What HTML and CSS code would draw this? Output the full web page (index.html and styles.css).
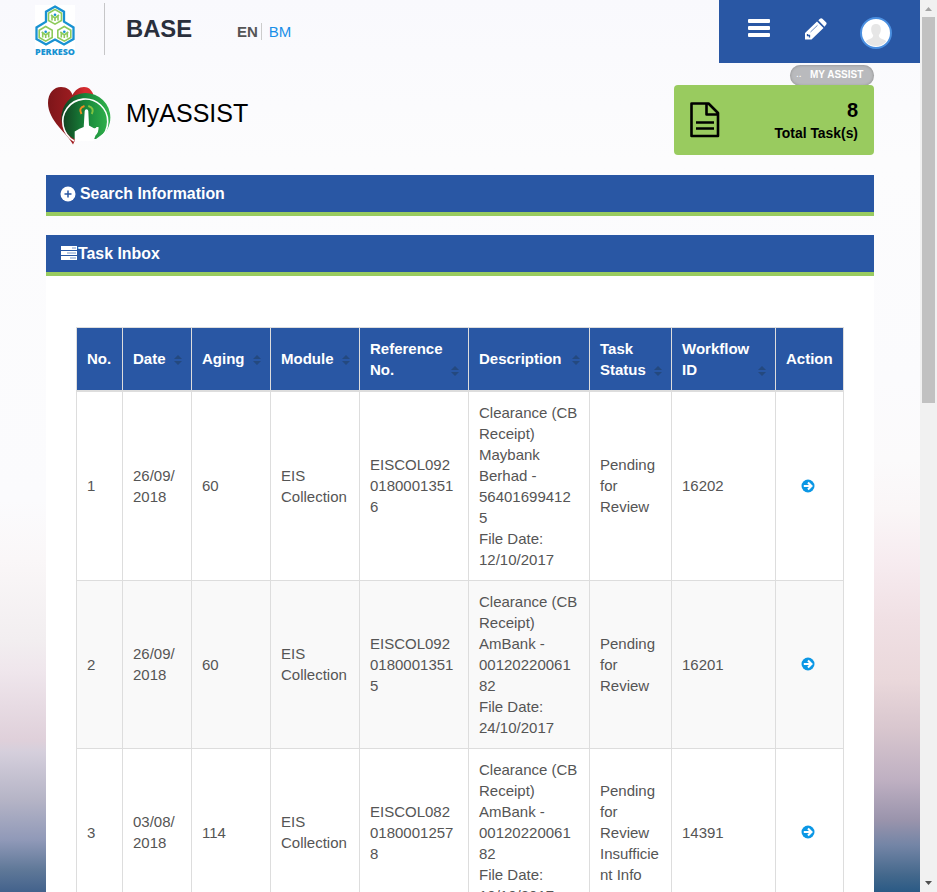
FILE: index.html
```html
<!DOCTYPE html>
<html lang="en">
<head>
<meta charset="utf-8">
<title>MyASSIST</title>
<link rel="stylesheet" href="styles.css">
</head>
<body>
<svg class="defs" width="0" height="0" aria-hidden="true">
  <symbol id="sort" viewBox="0 0 8 10"><path d="M0 4h8L4 0zM0 6h8L4 10z"/></symbol>
  <symbol id="go" viewBox="0 0 14 14"><circle cx="7" cy="7" r="6.5" fill="#0b97e5"/><path d="M2.8 7h7M7 3.4 10.5 7 7 10.6" fill="none" stroke="#fff" stroke-width="2.1"/></symbol>
</svg>
<div class="window">
  <div class="page">
    <header class="header">
      <div class="logo">
        <svg width="42" height="52" viewBox="0 0 42 52">
          <rect width="40" height="50" x="1" fill="#fff"/>
          <path d="M21 1.500 30 6.700v10L39.500 22.500v11.500L30 39.500 21 34.500l-9 5L2.500 34V22.500L12 16.700v-10z" fill="#fff" stroke="#1892d2" stroke-width="2.300"/>
          <g fill="none" stroke="#8dcb5c" stroke-width="1.600">
            <g id="cell"><path d="M21 4.500l6.500 3.700v7.300L21 19.200l-6.500-3.700V8.200z"/><path d="M17 10l4 3 4-3M18 11v4.500M24 11v4.500M21 13v3"/></g>
            <use href="#cell" x="-9.300" y="17"/>
            <use href="#cell" x="9.300" y="17"/>
          </g>
          <g fill="#1892d2"><circle cx="21" cy="9.800" r="1.300"/><circle cx="11.700" cy="26.800" r="1.300"/><circle cx="30.300" cy="26.800" r="1.300"/></g>
          <text x="1" y="49.500" textLength="40" lengthAdjust="spacingAndGlyphs" class="logo-text">PERKESO</text>
        </svg>
      </div>
      <div class="brand">BASE</div>
      <div class="lang"><b>EN</b><a>BM</a></div>
      <nav class="tools">
        <svg class="bars" width="22" height="18" viewBox="0 0 22 18" fill="#fff"><rect width="22" height="4" rx="1"/><rect y="7" width="22" height="4" rx="1"/><rect y="14" width="22" height="4" rx="1"/></svg>
        <svg class="pencil" width="22" height="22" viewBox="0 0 22 22"><path d="M0 21.500V15L12 3.500 18.500 10 6.500 21.500zM13.300 2.300 15 .7q1.200-1 2.400 0L21 4.300q1.200 1.200 0 2.500l-1.500 2z" fill="#fff"/><path d="M2.500 16v1.500h2V19.500" fill="none" stroke="#2957a4" stroke-width="1.300"/><path d="M5.500 14l7-6.700" stroke="#2957a4" stroke-width=".7"/></svg>
        <svg class="avatar" width="32" height="32" viewBox="0 0 32 32"><circle cx="16" cy="16" r="15" fill="#fff" stroke="#4a8fe0" stroke-width="2"/><path d="M16 7c3.500 0 5 2.500 4.800 6-.2 2.500-1 4-2 5 .2 3 1.500 3.500 6.200 5.200.8.300 1.200 1 1 1.500A14 14 0 0 1 6 24.700c-.2-.5.200-1.200 1-1.500 4.700-1.700 6-2.200 6.200-5.200-1-1-1.800-2.500-2-5C11 9.500 12.500 7 16 7z" fill="#e6e6e6"/></svg>
      </nav>
    </header>

    <main class="content">
      <div class="crumb-row"><div class="crumb"><span class="dots">..</span>MY ASSIST</div></div>
      <section class="intro">
        <svg class="heart" width="66" height="64" viewBox="0 0 66 64">
          <defs>
            <linearGradient id="red"><stop offset="0" stop-color="#7d1519"/><stop offset=".5" stop-color="#9b1c20"/><stop offset=".8" stop-color="#d62c30"/></linearGradient>
            <linearGradient id="green"><stop offset="0" stop-color="#123f20"/><stop offset=".5" stop-color="#18863b"/><stop offset="1" stop-color="#32b54c"/></linearGradient>
          </defs>
          <path d="M27 60.500C22 50 2 37 2 19 2 9 8 3 15 3c6 0 10 3 11.500 8C29 6 33 3 38 3c6 0 9 5 10 10L30 54z" fill="url(#red)"/>
          <path d="M28 55A24.500 24.500 0 1 1 60 47.500L50 55z" fill="url(#green)"/>
          <path d="M28 57A22.500 22.500 0 1 1 54 54.500" fill="none" stroke="#fff" stroke-width="1.600"/>
          <path d="M28.700 57V47.500q5-3.500 9-4.500l1-16q.2-1.800 1.800-1.800t1.800 1.800l.7 14.500 4.500 2.500q2 1 3-1h2q.5 5-3 8.500L47.500 57z" fill="#fff"/>
          <path d="M35.500 30q-3.500-6 3-8" fill="none" stroke="#ef8c22" stroke-width="2"/>
          <path d="M42.300 22q6.500 2 3.500 8" fill="none" stroke="#83c441" stroke-width="2"/>
        </svg>
        <h1 class="title">MyASSIST</h1>
        <div class="stat">
          <svg width="32" height="38" viewBox="0 0 32 38" fill="none" stroke="#000" stroke-width="2.600" stroke-linejoin="round"><path d="M2.500 2.500h17l9.500 9.500v23h-26.500zM17.500 2.500V13.500h11.500"/><path d="M7 21.500h18M7 27.500h18" stroke-width="2.600"/></svg>
          <div class="stat-text"><div class="stat-num">8</div><div class="stat-label">Total Task(s)</div></div>
        </div>
      </section>

      <h2 class="bar"><svg width="16" height="16" viewBox="0 0 16 16"><circle cx="8" cy="8" r="7.500" fill="#fff"/><path d="M8 4.500v7M4.500 8h7" stroke="#2957a4" stroke-width="1.500"/></svg><span class="bar-gap">Search Information</span></h2>
      <h2 class="bar"><svg class="list" width="18" height="14" viewBox="0 0 18 14"><path d="M1 0h16v4H1zM1 5h16v4H1zM1 10h16v4H1z" fill="#fff"/><path d="M12 2h4M7 7h9M10 12h6" stroke="#7795c7"/></svg><span>Task Inbox</span></h2>

      <section class="panel">
        <table class="tasks">
          <colgroup><col class="c-no"><col class="c-date"><col class="c-aging"><col class="c-module"><col class="c-ref"><col class="c-desc"><col class="c-status"><col class="c-flow"><col class="c-action"></colgroup>
          <thead>
            <tr>
              <th>No.</th>
              <th><div class="th">Date<svg><use href="#sort"/></svg></div></th>
              <th><div class="th">Aging<svg><use href="#sort"/></svg></div></th>
              <th><div class="th">Module<svg><use href="#sort"/></svg></div></th>
              <th><div class="th">Reference<br>No.<svg><use href="#sort"/></svg></div></th>
              <th><div class="th">Description<svg><use href="#sort"/></svg></div></th>
              <th><div class="th">Task<br>Status<svg><use href="#sort"/></svg></div></th>
              <th><div class="th">Workflow<br>ID<svg><use href="#sort"/></svg></div></th>
              <th>Action</th>
            </tr>
          </thead>
          <tbody>
            <tr>
              <td>1</td><td>26/09/<wbr>2018</td><td>60</td><td>EIS Collection</td><td>EISCOL092<wbr>0180001351<wbr>6</td>
              <td>Clearance (CB Receipt)<br>Maybank Berhad - <br>56401699412<br>5<br>File Date: 12/10/2017</td>
              <td>Pending for Review</td><td>16202</td><td class="go"><svg><use href="#go"/></svg></td>
            </tr>
            <tr>
              <td>2</td><td>26/09/<wbr>2018</td><td>60</td><td>EIS Collection</td><td>EISCOL092<wbr>0180001351<wbr>5</td>
              <td>Clearance (CB Receipt)<br>AmBank - <br>00120220061<br>82<br>File Date: 24/10/2017</td>
              <td>Pending for Review</td><td>16201</td><td class="go"><svg><use href="#go"/></svg></td>
            </tr>
            <tr>
              <td>3</td><td>03/08/<wbr>2018</td><td>114</td><td>EIS Collection</td><td>EISCOL082<wbr>0180001257<wbr>8</td>
              <td>Clearance (CB Receipt)<br>AmBank - <br>00120220061<br>82<br>File Date: 10/10/2017</td>
              <td>Pending for Review Insufficie<wbr>nt Info</td><td>14391</td><td class="go"><svg><use href="#go"/></svg></td>
            </tr>
          </tbody>
        </table>
      </section>
    </main>
  </div>
  <div class="scrollbar">
    <svg width="17" height="17" viewBox="0 0 17 17"><path d="M5 11h7L8.500 7z" fill="#a3a3a3"/></svg>
    <div class="thumb"></div>
    <svg class="down" width="17" height="17" viewBox="0 0 17 17"><path d="M5 6h7l-3.500 4z" fill="#505050"/></svg>
  </div>
</div>
</body>
</html>
```
FILE: styles.css
```css
* { box-sizing: border-box; }
body {
  margin: 0;
  font: 15px/21px "Liberation Sans", Arial, sans-serif;
  color: #555;
  overflow: hidden;
}
.defs { position: absolute; }
svg { display: block; flex: none; }
.window { display: flex; height: 892px; overflow: hidden; }
.page {
  width: 920px;
  height: 892px;
  overflow: hidden;
  background:
    linear-gradient(#f9f9fd 0, #fcfcfd 160px, #fbfbfd 380px, #fbfafb 460px, #faf6f7 510px, #f7ecf0 560px, #f0e0e4 620px, #ead8db 680px, #d8c6ce 730px, #bfb0c2 780px, #9a94ac 820px, #7485a6 845px, #44688c 875px, #2a5a85 892px) right / 460px 892px no-repeat,
    linear-gradient(#f9f9fd 0, #fcfcfd 160px, #fbfbfd 500px, #faf7f8 560px, #f2eef0 640px, #efe6ec 672px, #dfd0da 740px, #d5cfdc 752px, #b5b4c6 800px, #9099b8 840px, #5f7898 870px, #43628c 892px);
}

.header { display: flex; height: 63px; }
.logo {
  width: 105px;
  height: 52px;
  margin-top: 3px;
  padding: 2px 0 0 34px;
  border-right: 1px solid #c6c6c8;
}
.logo-text { font: 800 8px "Open Sans", sans-serif; fill: #1892d2; }
.brand { width: 132px; padding: 15px 0 0 21px; font-size: 23.800px; line-height: 28px; font-weight: bold; color: #2a2f3c; }
.lang { display: flex; padding-top: 23px; height: 40px; font-size: 15px; line-height: 17px; }
.lang b { padding-right: 3px; border-right: 1px solid #ccc; }
.lang a { padding-left: 7px; color: #1a8fe8; }
.tools { display: flex; width: 201px; margin-left: auto; background: #2957a4; }
.bars { margin: 19px 0 0 29px; }
.pencil { margin: 18px 0 0 35px; }
.avatar { margin: 17px 0 0 33px; }

.content { padding: 0 46px; }
.crumb-row { display: flex; justify-content: flex-end; height: 22px; padding-top: 2px; }
.crumb {
  display: flex;
  width: 84px;
  height: 21px;
  padding-left: 6px;
  border-radius: 11px;
  background: #b9babd;
  box-shadow: inset 0 0 3px #888;
  color: #fff;
  font: bold 10px/20px "Liberation Sans", Arial, sans-serif;
  white-space: nowrap;
}
.dots { width: 14px; line-height: 17px; font-weight: normal; }
.intro { display: flex; height: 90px; }
.heart { margin-top: -1px; }
.title { margin: 14px 0 0 14px; font-size: 25px; line-height: 28px; font-weight: normal; color: #000; }
.stat {
  display: flex;
  justify-content: space-between;
  width: 200px;
  height: 70px;
  margin-left: auto;
  padding: 16px 16px 0 15px;
  border-radius: 4px;
  background: #99cb5f;
  color: #000;
}
.stat-text { text-align: right; font-weight: bold; }
.stat-num { margin-top: -3px; font-size: 20px; line-height: 24px; }
.stat-label { margin-top: 2px; font-size: 13.900px; line-height: 18px; }
.bar {
  display: flex;
  align-items: center;
  height: 41px;
  margin: 0 0 19px;
  padding-left: 14px;
  border-bottom: 4px solid #99cb5f;
  background: #2957a4;
  color: #fff;
  font-size: 15.900px;
  line-height: 20px;
}
.bar-gap { margin-left: 4px; }
.list { margin-top: -2px; }
.bar + .bar { margin-bottom: 0; }

.panel { padding: 51px 30px 0; background: #fff; }
.tasks {
  width: 768px;
  table-layout: fixed;
  border-collapse: separate;
  border-spacing: 0;
  border: solid #ddd;
  border-width: 1px 0 0 1px;
}
.c-no { width: 46px; }
.c-date { width: 69px; }
.c-aging { width: 79px; }
.c-module { width: 89px; }
.c-ref { width: 109px; }
.c-desc { width: 121px; }
.c-status { width: 82px; }
.c-flow { width: 104px; }
.c-action { width: 68px; }
th, td {
  padding: 9.625px 9px 10.375px 10px;
  border: solid #ddd;
  border-width: 0 1px 1px 0;
  text-align: left;
  vertical-align: middle;
}
th { border-bottom-width: 2px; background: #2957a4; color: #fff; white-space: nowrap; }
.th { display: block; position: relative; }
.th svg { position: absolute; right: 0; bottom: 4px; width: 8px; height: 10px; fill: #24497f; }
tbody tr { background: #fff; }
tbody tr:nth-child(even) { background: #f9f9f9; }
td.go { padding-right: 13px; }
.go svg { width: 14px; height: 14px; margin: 0 auto; }

.scrollbar { width: 17px; height: 892px; background: #f1f1f1; }
.thumb { width: 13px; height: 386px; margin-left: 2px; background: #c1c1c1; }
.down { margin-top: 472px; }
```
